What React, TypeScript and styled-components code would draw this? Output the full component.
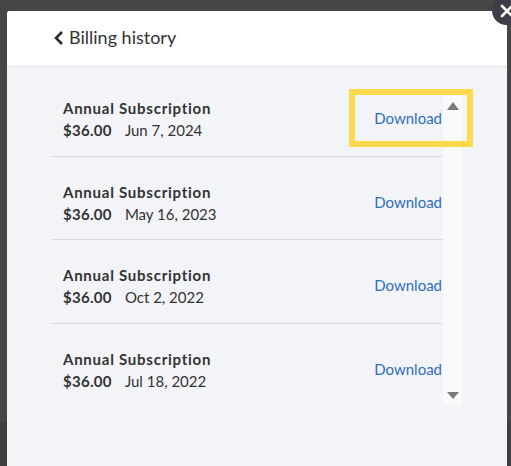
import styled, { createGlobalStyle } from 'styled-components';

const invoices = [
  { id: 1, title: 'Annual Subscription', amount: '$36.00', date: 'Jun 7, 2024' },
  { id: 2, title: 'Annual Subscription', amount: '$36.00', date: 'May 16, 2023' },
  { id: 3, title: 'Annual Subscription', amount: '$36.00', date: 'Oct 2, 2022' },
  { id: 4, title: 'Annual Subscription', amount: '$36.00', date: 'Jul 18, 2022' },
];

export default function App() {
  return (
    <>
      <GlobalStyle />
      <Backdrop>
        <Modal>
          <CloseButton aria-label="Close">
            <svg width="14" height="14" viewBox="0 0 14 14">
              <path d="M2 2 L12 12 M12 2 L2 12" stroke="#fff" strokeWidth="2.6" strokeLinecap="round" />
            </svg>
          </CloseButton>
          <Header>
            <BackIcon width="10" height="16" viewBox="0 0 10 16">
              <polyline points="8,2 2,8 8,14" fill="none" stroke="#2b2b2b" strokeWidth="2.6" strokeLinejoin="miter" />
            </BackIcon>
            <Title>Billing history</Title>
          </Header>
          <Body>
            <List>
              {invoices.map((item) => (
                <Row key={item.id}>
                  <Info>
                    <RowTitle>{item.title}</RowTitle>
                    <Meta>
                      <Amount>{item.amount}</Amount>
                      <span>{item.date}</span>
                    </Meta>
                  </Info>
                  <DownloadLink href="#">Download</DownloadLink>
                </Row>
              ))}
            </List>
            <ScrollTrack>
              <Arrow $dir="up" />
              <Arrow $dir="down" />
            </ScrollTrack>
          </Body>
          <Highlight />
        </Modal>
      </Backdrop>
    </>
  );
}

const GlobalStyle = createGlobalStyle`
  html, body {
    margin: 0;
    padding: 0;
    background: #454545;
    overflow: hidden;
  }
  * {
    box-sizing: border-box;
  }
`;

const Backdrop = styled.div`
  height: 466px;
  padding: 11px 4px 0 7px;
  background: linear-gradient(to bottom, #464646 0, #464646 422px, #3f3f3f 422px);
  overflow: hidden;
`;

const Modal = styled.div`
  position: relative;
  width: 500px;
  height: 470px;
  display: flex;
  flex-direction: column;
  background: #f3f4f8;
  border-radius: 3px 3px 0 0;
  font-family: Lato, 'Liberation Sans', sans-serif;
  color: #333;
`;

const CloseButton = styled.button`
  position: absolute;
  left: 485px;
  top: -15px;
  width: 29px;
  height: 29px;
  border: none;
  border-radius: 50%;
  background: #3d3e4a;
  display: flex;
  align-items: center;
  justify-content: center;
  padding: 0;
  z-index: 2;
`;

const Header = styled.div`
  display: flex;
  align-items: center;
  gap: 5px;
  height: 56px;
  padding: 0 0 0 47px;
  background: #fff;
  border-bottom: 1px solid #e2e4e9;
  border-radius: 3px 3px 0 0;
`;

const BackIcon = styled.svg`
  flex: none;
  margin-top: -2px;
`;

const Title = styled.div`
  font-size: 18px;
  color: #333;
  margin-top: -3px;
`;

const Body = styled.div`
  display: flex;
  padding: 6px 45px 0 45px;
`;

const List = styled.ul`
  flex: 1;
  height: 332px;
  margin: 0;
  padding: 0;
  list-style: none;
  overflow: hidden;
`;

const Row = styled.li`
  display: flex;
  align-items: center;
  justify-content: space-between;
  padding: 24px 1px 14.5px 11px;
  border-bottom: 1px solid #d8d9dd;
`;

const Info = styled.div`
  display: flex;
  flex-direction: column;
`;

const RowTitle = styled.div`
  font-size: 15px;
  font-weight: 700;
  line-height: 22px;
  letter-spacing: 0.75px;
  color: #333;
`;

const Meta = styled.div`
  display: flex;
  gap: 13px;
  font-size: 15px;
  line-height: 22px;
  color: #333;
`;

const Amount = styled.span`
  font-weight: 700;
  letter-spacing: 0.3px;
`;

const DownloadLink = styled.a`
  font-size: 15px;
  color: #2e6ebd;
  text-decoration: none;
  margin-top: -2px;
`;

const ScrollTrack = styled.div`
  width: 19px;
  height: 309px;
  margin-top: 23px;
  background: #fafafb;
  display: flex;
  flex-direction: column;
  justify-content: space-between;
  align-items: center;
  padding: 6px 0 6px 0;
`;

const Arrow = styled.div<{ $dir: 'up' | 'down' }>`
  width: 0;
  height: 0;
  border-left: 6px solid transparent;
  border-right: 6px solid transparent;
  ${({ $dir }) =>
    $dir === 'up'
      ? 'border-bottom: 8px solid #7b7b7b;'
      : 'border-top: 7px solid #7b7b7b;'}
`;

const Highlight = styled.div`
  position: absolute;
  left: 342px;
  top: 78px;
  width: 124px;
  height: 58px;
  border: 6px solid #fdd94e;
  pointer-events: none;
`;
